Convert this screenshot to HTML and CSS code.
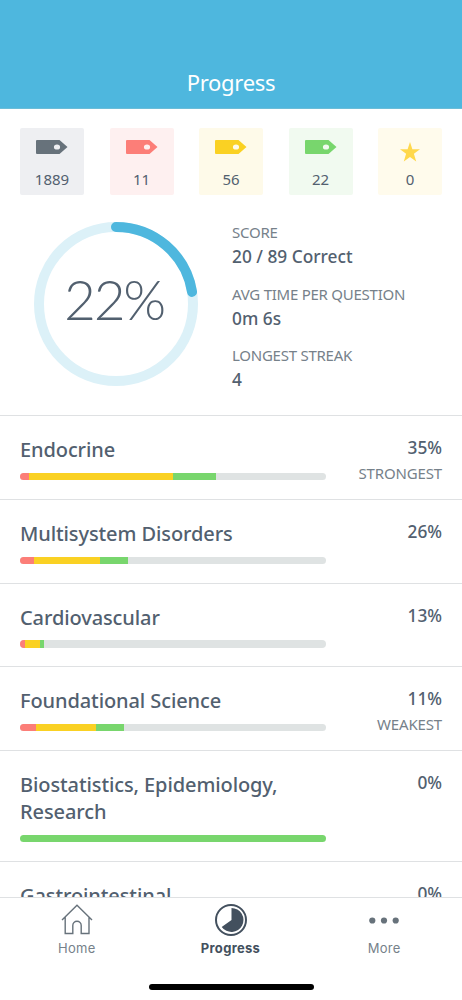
FILE: index.html
```html
<!DOCTYPE html>
<html lang="en">
<head>
  <meta charset="UTF-8" />
  <meta name="viewport" content="width=device-width, initial-scale=1.0"/>
  <title>Progress</title>
  <link rel="stylesheet" href="styles.css">
</head>
<body>
  <div class="app">
    <header class="header"><h1>Progress</h1></header>

    <main class="content">
      <div class="cards">
        <div class="card gray">
          <svg class="tag" viewBox="0 0 32 14"><path fill-rule="evenodd" d="M1 0H23.5L31.5 7L23.5 14H1Q0 14 0 13V1Q0 0 1 0ZM21 4.4A3.1 2.6 0 1 0 21 9.6A3.1 2.6 0 1 0 21 4.4Z"/></svg>
          <span>1889</span>
        </div>
        <div class="card red">
          <svg class="tag" viewBox="0 0 32 14"><path fill-rule="evenodd" d="M1 0H23.5L31.5 7L23.5 14H1Q0 14 0 13V1Q0 0 1 0ZM21 4.4A3.1 2.6 0 1 0 21 9.6A3.1 2.6 0 1 0 21 4.4Z"/></svg>
          <span>11</span>
        </div>
        <div class="card yellow">
          <svg class="tag" viewBox="0 0 32 14"><path fill-rule="evenodd" d="M1 0H23.5L31.5 7L23.5 14H1Q0 14 0 13V1Q0 0 1 0ZM21 4.4A3.1 2.6 0 1 0 21 9.6A3.1 2.6 0 1 0 21 4.4Z"/></svg>
          <span>56</span>
        </div>
        <div class="card green">
          <svg class="tag" viewBox="0 0 32 14"><path fill-rule="evenodd" d="M1 0H23.5L31.5 7L23.5 14H1Q0 14 0 13V1Q0 0 1 0ZM21 4.4A3.1 2.6 0 1 0 21 9.6A3.1 2.6 0 1 0 21 4.4Z"/></svg>
          <span>22</span>
        </div>
        <div class="card star">
          <svg class="star-icon" viewBox="0 0 20 20"><path d="M10 0L12.4 7.2H20L13.9 11.8L16.2 19.5L10 14.9L3.8 19.5L6.1 11.8L0 7.2H7.6Z"/></svg>
          <span>0</span>
        </div>
      </div>

      <section class="summary">
        <div class="ring">
          <svg viewBox="0 0 164 164">
            <circle class="ring-track" cx="82" cy="82" r="77"/>
            <circle class="ring-value" cx="82" cy="82" r="77" pathLength="89" stroke-dasharray="20 89" transform="rotate(-90 82 82)"/>
          </svg>
          <div class="ring-label">22%</div>
        </div>
        <dl class="stats">
          <dt>SCORE</dt>
          <dd>20 / 89 Correct</dd>
          <dt>AVG TIME PER QUESTION</dt>
          <dd>0m 6s</dd>
          <dt>LONGEST STREAK</dt>
          <dd>4</dd>
        </dl>
      </section>

      <ul class="topics">
        <li class="topic">
          <div class="topic-main">
            <h2>Endocrine</h2>
            <div class="bar"><i class="r" style="width: 2.8%"></i><i class="y" style="width: 47.3%"></i><i class="g" style="width: 13.8%"></i></div>
          </div>
          <div class="topic-score"><b>35%</b><small>STRONGEST</small></div>
        </li>
        <li class="topic">
          <div class="topic-main">
            <h2>Multisystem Disorders</h2>
            <div class="bar"><i class="r" style="width: 4.6%"></i><i class="y" style="width: 21.6%"></i><i class="g" style="width: 9%"></i></div>
          </div>
          <div class="topic-score"><b>26%</b></div>
        </li>
        <li class="topic">
          <div class="topic-main">
            <h2>Cardiovascular</h2>
            <div class="bar"><i class="r" style="width: 1.6%"></i><i class="y" style="width: 4.8%"></i><i class="g" style="width: 1.6%"></i></div>
          </div>
          <div class="topic-score"><b>13%</b></div>
        </li>
        <li class="topic">
          <div class="topic-main">
            <h2>Foundational Science</h2>
            <div class="bar"><i class="r" style="width: 5.3%"></i><i class="y" style="width: 19.7%"></i><i class="g" style="width: 9%"></i></div>
          </div>
          <div class="topic-score"><b>11%</b><small>WEAKEST</small></div>
        </li>
        <li class="topic">
          <div class="topic-main">
            <h2>Biostatistics, Epidemiology, Research</h2>
            <div class="bar"><i class="g" style="width: 100%"></i></div>
          </div>
          <div class="topic-score"><b>0%</b></div>
        </li>
        <li class="topic">
          <div class="topic-main">
            <h2>Gastrointestinal</h2>
            <div class="bar"></div>
          </div>
          <div class="topic-score"><b>0%</b></div>
        </li>
      </ul>
    </main>

    <nav class="tabs">
      <div class="tab-row">
        <a class="tab">
          <svg viewBox="0 0 32 32"><path class="line" d="M1 16L16 1.2L31 16M4.2 13V29.5H11.8V21.5A4.2 4.2 0 0 1 20.2 21.5V29.5H28V13"/></svg>
          <span>Home</span>
        </a>
        <a class="tab active">
          <svg viewBox="0 0 32 32"><circle class="ring-line" cx="16" cy="16" r="15"/><path d="M16.5 16V4A12 12 0 1 1 6.7 23Z"/></svg>
          <span>Progress</span>
        </a>
        <a class="tab">
          <svg viewBox="0 0 32 32"><circle cx="4.3" cy="16.5" r="3.1"/><circle cx="16" cy="16.5" r="3.1"/><circle cx="27.7" cy="16.5" r="3.1"/></svg>
          <span>More</span>
        </a>
      </div>
      <div class="home-indicator"></div>
    </nav>
  </div>
</body>
</html>
```
FILE: styles.css
```css
* {
  box-sizing: border-box;
}
body {
  margin: 0;
  font-family: 'Noto Sans', sans-serif;
  color: #52606f;
  background: #fff;
}
.app {
  height: 1000px;
  display: flex;
  flex-direction: column;
  overflow: hidden;
}
.header {
  flex: none;
  height: 109px;
  padding-top: 67px;
  background: #4eb7de;
  border-bottom: 1px solid #6bbdd8;
}
h1 {
  margin: 0;
  color: #fff;
  font-size: 22px;
  line-height: 30px;
  font-weight: 400;
  letter-spacing: -0.3px;
  text-align: center;
}
.content {
  flex: 1;
  min-height: 0;
  overflow: hidden;
}
.cards {
  display: flex;
  justify-content: space-between;
  padding: 19px 20px 0;
}
.card {
  width: 64px;
  height: 67px;
  padding-top: 12px;
  border-radius: 2px;
  display: flex;
  flex-direction: column;
  align-items: center;
}
.card span {
  margin-top: auto;
  margin-bottom: 6px;
  font-size: 15px;
  line-height: 20px;
}
.tag {
  width: 32px;
  height: 14px;
}
.star-icon {
  width: 20px;
  height: 20px;
  margin-top: 2px;
}
.gray { background: #eeeff2; fill: #67727b; }
.red { background: #fef0f0; fill: #fc7e78; }
.yellow { background: #fefae9; fill: #fad123; }
.green { background: #f1faf0; fill: #78d66d; }
.star { background: #fffbec; fill: #ffd84c; }

.summary {
  display: flex;
  height: 220.4px;
  padding: 27px 20px 0 34px;
}
.ring {
  position: relative;
  width: 164px;
  height: 164px;
}
.ring svg {
  display: block;
}
.ring circle {
  fill: none;
  stroke-width: 10;
}
.ring-track {
  stroke: #dcf1f8;
}
.ring-value {
  stroke: #4eb7de;
  stroke-linecap: round;
}
.ring-label {
  position: absolute;
  inset: 0;
  padding-right: 4px;
  font-family: Lato, sans-serif;
  font-weight: 300;
  font-size: 55px;
  line-height: 154px;
  letter-spacing: -2.3px;
  text-align: center;
}
.stats {
  margin: -1px 0 0 34px;
}
.stats dt {
  font-size: 15px;
  line-height: 22px;
  letter-spacing: -0.25px;
  color: #76818a;
}
.stats dd {
  margin: 0 0 12.5px;
  font-size: 17.3px;
  line-height: 27px;
  font-weight: 500;
}

.topics {
  list-style: none;
  margin: 0;
  padding: 0;
}
.topic {
  display: flex;
  justify-content: space-between;
  padding: 20px 20px 18.7px;
  border-top: 1px solid #dfe1e3;
}
.topic-main {
  width: 306px;
}
h2 {
  margin: 0 0 9.7px;
  font-size: 20px;
  line-height: 27px;
  font-weight: 500;
  letter-spacing: -0.1px;
}
.bar {
  display: flex;
  height: 7.3px;
  border-radius: 4px;
  background: #dfe3e3;
  overflow: hidden;
}
.r { background: #fc7e78; }
.y { background: #fad123; }
.g { background: #78d66d; }
.topic-score {
  height: 0;
  text-align: right;
}
.topic-score b {
  display: block;
  font-size: 17.3px;
  line-height: 24px;
  font-weight: 500;
}
.topic-score small {
  display: block;
  font-size: 15px;
  line-height: 27px;
  letter-spacing: -0.15px;
  color: #76818a;
}

.tabs {
  flex: none;
  height: 103px;
  border-top: 1px solid #dfe1e3;
  background: #fff;
}
.tab-row {
  display: flex;
  height: 88px;
  margin-right: 1px;
}
.tab {
  flex: 1;
  padding-top: 6px;
  text-align: center;
  font-family: Inter, sans-serif;
  font-size: 13px;
  line-height: 18px;
  letter-spacing: 0.3px;
  color: #76818a;
  fill: #67727b;
}
.tab svg {
  display: block;
  width: 32px;
  height: 32px;
  margin: 0 auto 3px;
}
.tab.active {
  color: #43505e;
  fill: #43505e;
  font-weight: 700;
}
.line {
  fill: none;
  stroke: #67727b;
  stroke-width: 1.4;
}
.ring-line {
  fill: none;
  stroke: #43505e;
  stroke-width: 2;
}
.home-indicator {
  width: 165px;
  height: 6px;
  margin: -2px auto 0;
  border-radius: 3px;
  background: #000;
}
```
